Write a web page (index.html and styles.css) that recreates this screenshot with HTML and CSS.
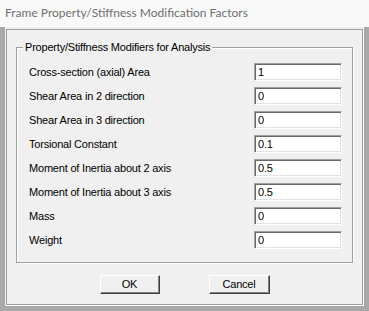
FILE: index.html
```html
<!DOCTYPE html>
<html>
<head>
<meta charset="utf-8">
<link rel="stylesheet" href="styles.css">
</head>
<body>
<div class="titlebar">Frame Property/Stiffness Modification Factors</div>
<div class="win">
  <div class="client">
    <div class="group">
      <span class="legend">Property/Stiffness Modifiers for Analysis</span>
      <div class="rows">
        <div class="row"><span class="label">Cross-section (axial) Area</span><div class="field">1</div></div>
        <div class="row"><span class="label">Shear Area in 2 direction</span><div class="field">0</div></div>
        <div class="row"><span class="label">Shear Area in 3 direction</span><div class="field">0</div></div>
        <div class="row"><span class="label">Torsional Constant</span><div class="field">0.1</div></div>
        <div class="row"><span class="label">Moment of Inertia about 2 axis</span><div class="field">0.5</div></div>
        <div class="row"><span class="label">Moment of Inertia about 3 axis</span><div class="field">0.5</div></div>
        <div class="row"><span class="label">Mass</span><div class="field">0</div></div>
        <div class="row"><span class="label">Weight</span><div class="field">0</div></div>
      </div>
    </div>
    <div class="buttons">
      <div class="btn btn-ok">OK</div>
      <div class="btn btn-cancel">Cancel</div>
    </div>
  </div>
</div>
</body>
</html>
```
FILE: styles.css
```css
html, body {
  margin: 0;
  padding: 0;
}
body {
  width: 369px;
  height: 311px;
  background: #a9a9a9;
  overflow: hidden;
  font-family: "Liberation Sans", Arial, sans-serif;
  font-size: 11px;
  letter-spacing: -0.2px;
  color: #000;
}
.titlebar {
  height: 27px;
  line-height: 26px;
  background: #f9f9f9;
  color: #6f6f6f;
  font-family: "Lato", "Liberation Sans", sans-serif;
  font-size: 12px;
  letter-spacing: 0;
  padding-left: 5px;
  box-sizing: border-box;
  white-space: nowrap;
}
.win {
  margin: 0 5px 0 5px;
  height: 279px;
  background: #f0f0f0;
  padding: 2px 1px 1px 1px;
  box-sizing: border-box;
}
.client {
  height: 100%;
  box-sizing: border-box;
  border: 1px solid #a0a0a0;
  box-shadow: 1px 1px 0 #fff;
  padding: 17px 9px 0 9px;
}
.group {
  position: relative;
  border: 1px solid #a0a0a0;
  box-shadow: inset 1px 1px 0 #fff, 1px 1px 0 #fff;
  padding: 12px 10px 10px 12px;
}
.legend {
  position: absolute;
  left: 6px;
  top: -8px;
  background: #f0f0f0;
  padding: 0 2px 0 2px;
  line-height: 14px;
  white-space: nowrap;
}
.rows {
  display: flex;
  flex-direction: column;
}
.row {
  height: 24px;
  display: flex;
  align-items: center;
  justify-content: space-between;
}
.label {
  white-space: nowrap;
}
.field {
  width: 88px;
  height: 18px;
  box-sizing: border-box;
  background: #fff;
  border: 1px solid;
  border-color: #a0a0a0 #fff #fff #a0a0a0;
  box-shadow: inset 1px 1px 0 #696969, inset -1px -1px 0 #e3e3e3;
  padding-left: 3px;
  line-height: 16px;
}
.buttons {
  display: flex;
  justify-content: center;
  gap: 49px;
  margin-top: 12px;
}
.btn {
  height: 19px;
  box-sizing: border-box;
  background: #f0f0f0;
  border: 1px solid;
  border-color: #fff #404040 #404040 #fff;
  box-shadow: inset -1px -1px 0 #808080;
  text-align: center;
  line-height: 16px;
}
.btn-ok { width: 60px; }
.btn-cancel { width: 61px; }
```
